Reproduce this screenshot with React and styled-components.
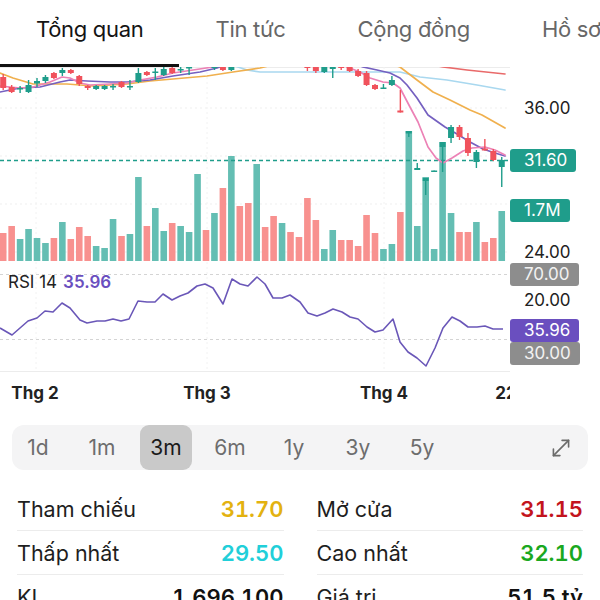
import React from 'react';
import styled, { createGlobalStyle } from 'styled-components';

const FONT = `Inter, "Liberation Sans", Arial, sans-serif`;

const Global = createGlobalStyle`
  html, body { margin: 0; padding: 0; background: #fff; }
  body { font-family: ${FONT}; color: #1c1c1e; overflow: hidden; }
  * { box-sizing: border-box; }
`;

const Page = styled.div`
  width: 600px;
  height: 600px;
  overflow: hidden;
  display: flex;
  flex-direction: column;
  background: #fff;
`;

const TabBar = styled.nav`
  display: flex;
  flex: none;
  height: 67px;
  white-space: nowrap;
  overflow: hidden;
`;

const Tab = styled.div`
  flex: none;
  height: 67px;
  padding: 16px 36px 0;
  font-size: 22px;
  line-height: 26px;
  letter-spacing: -0.3px;
  color: ${(p) => (p.$active ? '#141414' : '#676767')};
  border-bottom: 3px solid ${(p) => (p.$active ? '#111' : 'transparent')};
`;

const ChartRow = styled.div`
  display: flex;
  flex: none;
  height: 305px;
`;

const Plot = styled.div`
  position: relative;
  width: 510px;
  height: 305px;
  flex: none;
  overflow: hidden;
`;

const Legend = styled.div`
  position: absolute;
  left: 8px;
  top: 204px;
  font-size: 17px;
  line-height: 22px;
  color: #222;
  display: flex;
  gap: 6px;
`;

const LegendValue = styled.span`
  color: #6a4fbf;
  font-weight: 600;
`;

const PriceAxis = styled.div`
  position: relative;
  flex: 1;
  height: 305px;
`;

const AxisLabel = styled.div`
  position: absolute;
  left: 0;
  height: 23px;
  line-height: 23px;
  padding: 0 9px 0 14px;
  border-radius: 3px;
  font-size: 17px;
  white-space: nowrap;
  background: ${(p) => p.$bg || 'transparent'};
  color: ${(p) => p.$fg || '#222'};
`;

const TimeAxis = styled.div`
  position: relative;
  flex: none;
  width: 510px;
  height: 42px;
  overflow: hidden;
`;

const TimeLabel = styled.div`
  position: absolute;
  top: 10px;
  transform: translateX(-50%);
  font-size: 17px;
  line-height: 22px;
  font-weight: 700;
  color: #222;
  white-space: nowrap;
`;

const PeriodBar = styled.div`
  flex: none;
  margin: 11px 12px 0;
  height: 45px;
  background: #f4f4f5;
  border-radius: 12px;
  display: flex;
  align-items: center;
  gap: 12px;
  padding-right: 14px;
`;

const PeriodChip = styled.div`
  width: 52px;
  height: 45px;
  border-radius: 9px;
  display: flex;
  align-items: center;
  justify-content: center;
  font-size: 21px;
  color: ${(p) => (p.$active ? '#1a1a1a' : '#6d6d6d')};
  background: ${(p) => (p.$active ? '#c9c9c9' : 'transparent')};
`;

const ExpandButton = styled.div`
  margin-left: auto;
  display: flex;
  align-items: center;
  color: #6b6b6b;
`;

const Stats = styled.div`
  flex: none;
  display: grid;
  grid-template-columns: 1fr 1fr;
  column-gap: 33px;
  padding: 0 17px;
  margin-top: 17px;
`;

const StatRow = styled.div`
  display: flex;
  align-items: center;
  justify-content: space-between;
  height: 44px;
  border-bottom: 1px solid #ececec;
`;

const StatLabel = styled.span`
  font-size: 21.5px;
  color: #1e1e1e;
`;

const StatValue = styled.span`
  font-size: 22px;
  font-weight: 600;
  font-variant-numeric: tabular-nums;
  color: ${(p) => p.$color || '#111'};
`;

const TEAL = '#1f9d8b';
const RED = '#f0525c';
const VTEAL = '#64beb3';
const VRED = '#f8918f';

const X = (i) => 3.2 + i * 8.45;

const vol = [
  [28, 'r'], [35, 'r'], [22, 't'], [32, 't'], [23, 't'], [18, 't'], [23, 'r'], [39, 't'], [22, 'r'], [34, 'r'],
  [25, 'r'], [15, 't'], [13, 't'], [42, 't'], [25, 'r'], [27, 't'], [84, 't'], [35, 'r'], [53, 't'], [30, 't'],
  [38, 'r'], [35, 't'], [29, 't'], [87, 't'], [31, 'r'], [48, 't'], [73, 'r'], [105, 't'], [55, 'r'], [58, 'r'],
  [97, 't'], [34, 'r'], [45, 'r'], [38, 't'], [29, 'r'], [24, 'r'], [63, 'r'], [41, 'r'], [12, 't'], [31, 't'],
  [21, 'r'], [21, 'r'], [15, 'r'], [46, 'r'], [28, 'r'], [12, 't'], [17, 't'], [49, 'r'], [130, 't'], [35, 't'],
  [84, 't'], [12, 't'], [119, 't'], [48, 't'], [29, 'r'], [29, 'r'], [39, 't'], [19, 'r'], [23, 'r'], [50, 't'],
];

// [color, bodyTop, bodyBottom, wickTop, wickBottom] in page pixels
const candles = [
  ['r', 77, 88, 74, 90], ['r', 87, 92, 85, 93], ['t', 88, 89.5, 86, 93], ['t', 85, 92, 80, 93],
  ['t', 81, 83.5, 78, 87], ['t', 77, 81, 75, 83], ['r', 73, 78, 72, 79], ['t', 70, 73, 68, 76],
  ['r', 70, 73, 69, 74], ['r', 76, 84, 75, 86], ['r', 86, 88, 85, 90], ['t', 86, 89, 85, 90],
  ['t', 86, 89, 85, 90], ['t', 86, 87.5, 84, 90], ['r', 82, 87, 81, 88], ['t', 86, 87.5, 80, 90],
  ['t', 73, 82, 68, 83], ['r', 72, 75, 71, 76], ['t', 71.5, 73, 68, 80], ['t', 69, 75, 67, 76],
  ['r', 68, 73, 66, 74], ['t', 69, 70.5, 66, 73], ['t', 67, 68.5, 64, 75],
  null, null,
  ['t', 63, 68, 60, 70], ['r', 64, 70, 62, 71], ['t', 64, 70, 62, 71],
  null, null, null, null, null, null, null, null,
  ['r', 66, 68, 60, 71], ['r', 66, 71, 62, 73], ['t', 67, 72, 64, 73], ['t', 67, 69, 65, 78],
  ['r', 66, 68, 62, 70], ['r', 67, 71, 64, 72], ['r', 71, 76, 69, 77], ['r', 73, 85, 71, 86],
  ['r', 85, 89, 84, 90], ['t', 87.5, 89, 84, 89], ['t', 80, 85, 76, 86], ['r', 110.5, 112.5, 90, 112.5],
  ['t', 131, 133.5, 131, 137], ['t', 168, 170, 163, 170], ['t', 178, 181, 178, 195], ['t', 170.5, 172, 170.5, 172],
  ['t', 142, 147, 142, 172], ['t', 127, 138, 125, 143], ['r', 127, 137, 125, 140], ['r', 138, 153, 133, 156],
  ['t', 152, 162, 150, 168], ['r', 148.5, 150.5, 139, 150.5], ['r', 151, 160, 149, 161], ['t', 160, 167, 157, 187],
];

const pts = (a) => a.map(([x, y]) => `${x},${y}`).join(' ');

const maLines = [
  {
    color: '#a9d8ef',
    points: [[215, 60], [235, 66], [247, 70], [260, 72], [310, 72], [360, 72], [400, 72], [420, 77], [447, 80], [477, 85], [505, 90]],
  },
  {
    color: '#e96a6a',
    points: [[420, 62], [443, 67], [467, 70], [505, 74]],
  },
  {
    color: '#f0b04e',
    points: [[0, 73], [13, 78], [33, 84], [67, 84], [93, 86], [127, 84], [150, 81], [173, 79], [207, 76], [233, 72], [260, 68], [280, 63], [380, 60], [400, 67], [417, 80], [433, 92], [450, 100], [470, 110], [482, 115], [505, 128]],
  },
  {
    color: '#7560c0',
    points: [[0, 92], [20, 88], [40, 87], [60, 82], [70, 80], [87, 81], [110, 82], [127, 82], [150, 80], [173, 76], [200, 72], [217, 68], [230, 63], [300, 55], [350, 62], [363, 67], [377, 70], [390, 73], [400, 78], [407, 85], [417, 98], [428, 115], [445, 127], [457, 134], [470, 142], [483, 149], [495, 153], [505, 156]],
  },
  {
    color: '#ec82b6',
    points: [[0, 86], [20, 88], [33, 87], [50, 82], [62, 77], [70, 78], [80, 83], [90, 85], [110, 84], [127, 83], [140, 80], [157, 77], [173, 73], [193, 70], [213, 67], [225, 62], [240, 55], [300, 55], [335, 60], [347, 67], [360, 72], [370, 78], [383, 82], [393, 83], [400, 88], [410, 107], [418, 122], [428, 147], [436, 158], [443, 163], [452, 158], [463, 151], [472, 148], [485, 147], [495, 150], [505, 155]],
  },
];

const rsi = [
  [0, 328], [12, 335], [20, 328], [28, 321], [37, 318], [45, 311], [53, 312], [62, 303], [70, 308], [80, 320],
  [87, 323], [97, 321], [105, 321], [113, 319], [121, 321], [129, 319], [138, 301], [147, 302], [155, 302], [163, 294],
  [172, 300], [180, 296], [188, 293], [197, 286], [205, 284], [213, 288], [223, 304], [232, 279], [240, 284], [248, 286],
  [257, 277], [265, 284], [273, 298], [282, 298], [290, 295], [300, 302], [308, 313], [317, 316], [325, 313], [333, 309],
  [342, 312], [350, 317], [358, 319], [367, 327], [375, 332], [383, 330], [393, 319], [400, 342], [408, 352], [417, 358],
  [426, 366], [435, 348], [443, 328], [452, 317], [460, 321], [468, 327], [477, 327], [485, 326], [493, 329], [503, 329],
];

const axisLabels = [
  { y: 108, text: '36.00' },
  { y: 160.5, text: '31.60', bg: '#1f9d8b', fg: '#fff' },
  { y: 210, text: '1.7M', bg: '#1f9d8b', fg: '#fff' },
  { y: 252, text: '24.00' },
  { y: 274.5, text: '70.00', bg: '#8d8d8d', fg: '#f2f2f2' },
  { y: 300, text: '20.00' },
  { y: 330, text: '35.96', bg: '#6a4fbf', fg: '#fff' },
  { y: 353.5, text: '30.00', bg: '#8d8d8d', fg: '#f2f2f2' },
];

const timeLabels = [
  { x: 35, text: 'Thg 2' },
  { x: 207, text: 'Thg 3' },
  { x: 384, text: 'Thg 4' },
  { x: 506, text: '22' },
];

function ChartSvg() {
  return (
    <svg width="510" height="305" viewBox="0 67 510 305" style={{ display: 'block' }}>
      <line x1="0" y1="67.5" x2="510" y2="67.5" stroke="#ececec" />
      {[108, 156, 204, 252].map((y) => (
        <line key={y} x1="0" y1={y} x2="510" y2={y} stroke="#efefef" strokeDasharray="2 3" />
      ))}
      {[36, 207, 384].map((x) => (
        <line key={x} x1={x} y1="67" x2={x} y2="372" stroke="#f2f2f2" strokeDasharray="2 3" />
      ))}
      {vol.map(([h, c], i) => (
        <rect key={i} x={X(i) - 3.3} y={261 - h} width="6.6" height={h} fill={c === 't' ? VTEAL : VRED} />
      ))}
      <line x1="0" y1="160.5" x2="510" y2="160.5" stroke={TEAL} strokeWidth="1.5" strokeDasharray="4 3" />
      {maLines.map((l, i) => (
        <polyline key={i} points={pts(l.points)} fill="none" stroke={l.color} strokeWidth="1.7" strokeLinejoin="round" strokeLinecap="round" />
      ))}
      {candles.map((c, i) => {
        if (!c) return null;
        const [col, bt, bb, wt, wb] = c;
        const fill = col === 't' ? TEAL : RED;
        const x = X(i);
        return (
          <g key={i}>
            <rect x={x - 0.7} y={wt} width="1.4" height={wb - wt} fill={fill} />
            <rect x={x - 3} y={bt} width="6" height={Math.max(bb - bt, 1.4)} fill={fill} />
          </g>
        );
      })}
      <line x1="0" y1="274.5" x2="510" y2="274.5" stroke="#d4d4d4" strokeDasharray="3 3" />
      <line x1="0" y1="339.5" x2="510" y2="339.5" stroke="#d4d4d4" strokeDasharray="3 3" />
      <polyline points={pts(rsi)} fill="none" stroke="#6a57b8" strokeWidth="1.6" strokeLinejoin="round" />
      <line x1="0" y1="371.5" x2="510" y2="371.5" stroke="#ececec" />
    </svg>
  );
}

function ExpandIcon() {
  return (
    <svg width="26" height="26" viewBox="0 0 24 24" fill="none" stroke="currentColor" strokeWidth="1.5" strokeLinecap="round" strokeLinejoin="round">
      <polyline points="13 5 19 5 19 11" />
      <polyline points="11 19 5 19 5 13" />
      <line x1="19" y1="5" x2="5" y2="19" />
    </svg>
  );
}

const tabs = ['Tổng quan', 'Tin tức', 'Cộng đồng', 'Hồ sơ'];
const periods = ['1d', '1m', '3m', '6m', '1y', '3y', '5y'];

const stats = [
  ['Tham chiếu', '31.70', '#e3b210', 'Mở cửa', '31.15', '#c3141d'],
  ['Thấp nhất', '29.50', '#21cfd9', 'Cao nhất', '32.10', '#1aa81f'],
  ['KL', '1,696,100', '#111', 'Giá trị', '51.5 tỷ', '#111'],
];

export default function App() {
  return (
    <Page>
      <Global />
      <TabBar>
        {tabs.map((t, i) => (
          <Tab key={t} $active={i === 0}>{t}</Tab>
        ))}
      </TabBar>
      <ChartRow>
        <Plot>
          <ChartSvg />
          <Legend>
            <span>RSI 14</span>
            <LegendValue>35.96</LegendValue>
          </Legend>
        </Plot>
        <PriceAxis>
          {axisLabels.map((l) => (
            <AxisLabel key={l.text} $bg={l.bg} $fg={l.fg} style={{ top: l.y - 67 - 11.5 }}>
              {l.text}
            </AxisLabel>
          ))}
        </PriceAxis>
      </ChartRow>
      <TimeAxis>
        {timeLabels.map((t) => (
          <TimeLabel key={t.text} style={{ left: t.x }}>{t.text}</TimeLabel>
        ))}
      </TimeAxis>
      <PeriodBar>
        {periods.map((p) => (
          <PeriodChip key={p} $active={p === '3m'}>{p}</PeriodChip>
        ))}
        <ExpandButton>
          <ExpandIcon />
        </ExpandButton>
      </PeriodBar>
      <Stats>
        {stats.map((r) => (
          <React.Fragment key={r[0]}>
            <StatRow>
              <StatLabel>{r[0]}</StatLabel>
              <StatValue $color={r[2]}>{r[1]}</StatValue>
            </StatRow>
            <StatRow>
              <StatLabel>{r[3]}</StatLabel>
              <StatValue $color={r[5]}>{r[4]}</StatValue>
            </StatRow>
          </React.Fragment>
        ))}
      </Stats>
    </Page>
  );
}
